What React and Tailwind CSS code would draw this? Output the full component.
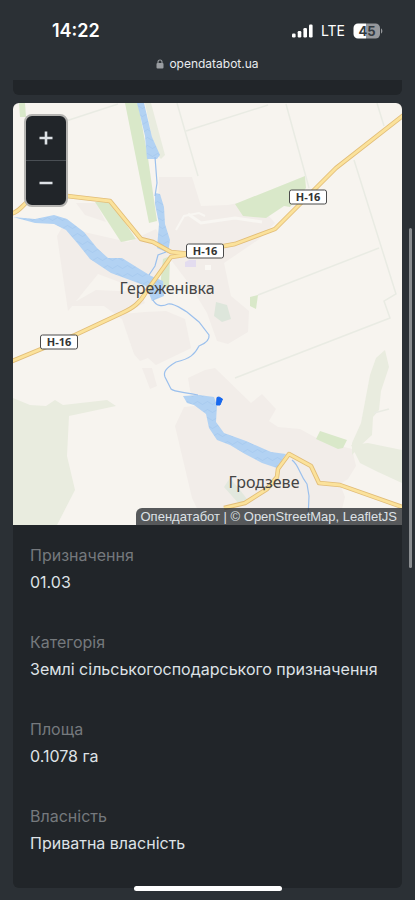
import React from 'react';

const fields = [
  { label: 'Призначення', value: '01.03' },
  { label: 'Категорія', value: 'Землі сільськогосподарського призначення' },
  { label: 'Площа', value: '0.1078 га' },
  { label: 'Власність', value: 'Приватна власність' },
];

const shields = [
  { x: 308, y: 197 },
  { x: 205, y: 251 },
  { x: 59, y: 342 },
];

const roads = [
  'M10 214 C18 213 21 207 27 202 L34 196 L67 196 L110 201 L141 239 L153 242 L171 252 L191 254',
  'M191 252 L235 244 L275 229 L296 208 L336 168 L405 114',
  'M191 254 L171 257 L146 292 C140 303 133 308 122 313 L75 335 L10 362',
  'M224 508 L245 503 L267 489 L277 477 L278 469 L289 454 L311 466 L319 483 L340 485 L405 508',
];

const StatusBar = () => (
  <div className="flex items-center justify-between pl-[52px] pr-8 h-[62px]">
    <span className="text-lg font-semibold leading-6">14:22</span>
    <div className="flex items-center gap-2">
      <svg width="21" height="14" viewBox="0 0 21 14" fill="#fff" aria-hidden="true">
        <rect x="0" y="9.500" width="3.600" height="4" rx="1.2" />
        <rect x="5.700" y="7" width="3.600" height="6.500" rx="1.2" />
        <rect x="11.400" y="4" width="3.600" height="9.500" rx="1.2" />
        <rect x="17" y="0.5" width="3.600" height="13" rx="1.2" />
      </svg>
      <span className="text-sm leading-5">LTE</span>
      <svg width="30" height="16" viewBox="0 0 30 16" role="img" aria-label="45">
        <path d="M5 .5h8v15H5a4.500 4.500 0 0 1-4.500-4.500V5A4.500 4.500 0 0 1 5 .5z" fill="#fff" />
        <path d="M13 .5h9.500A4.500 4.500 0 0 1 27 5v6a4.500 4.500 0 0 1-4.500 4.500H13z" fill="#96989c" />
        <path d="M28 5.500c1.800.6 1.800 4.400 0 5z" fill="#96989c" />
        <text x="14" y="12.500" fontSize="13" fontWeight="700" fill="#343a40" textAnchor="middle" fontFamily="Inter, sans-serif">45</text>
      </svg>
    </div>
  </div>
);

const MapDrawing = () => (
  <svg viewBox="13 103 389 422" preserveAspectRatio="xMidYMid slice" className="block w-full h-full" aria-hidden="true">
    <defs>
      <pattern id="waves" width="10" height="8" patternUnits="userSpaceOnUse">
        <rect width="10" height="8" fill="#b2d2f3" />
        <path d="M0 3q2.500 3 5 0t5 0" fill="none" stroke="#a5c8ee" strokeWidth="0.8" />
      </pattern>
    </defs>
    <rect x="13" y="103" width="389" height="422" fill="#f7f4ef" />

    {/* built-up areas */}
    <g fill="#f2ede9">
      <path d="M159 177L192 177L201 206L228 205L238 203L262 208L275 223L258 240L224 263L231 296L249 311L248 332L228 344L217 341L207 313L190 285L168 256L158 210z" />
      <path d="M57 236L64 224L84 232L128 242L156 229L170 253L146 292L98 274L68 311z" />
      <path d="M76 203L96 203L106 222L85 215z" />
      <path d="M104 306L68 306L96 290L140 292L145 303L122 314L145 312L166 311L185 319L191 348L183 352L156 365L148 358L140 361L134 354L122 319z" />
      <path d="M142 368L152 368L157 386L150 389z" />
      <path d="M188 378L205 370L215 368L251 403L262 394L276 409L269 421L278 427L300 429L322 441L352 449L356 466L348 479L340 484L345 497L338 525L205 525L192 498L175 426L184 407L194 406L190 390z" />
    </g>
    <path d="M188 214L201 223L235 218L262 222" fill="none" stroke="#f8f6f2" strokeWidth="3" />
    <path d="M176 230L184 216L199 213L205 216" fill="none" stroke="#f8f6f2" strokeWidth="2" />
    <path d="M189 260h7v7h-11v-5z" fill="#e3dcef" />
    <path d="M205 265h6v5h-6z" fill="#faf8f4" />

    {/* pale fields and meadows */}
    <g fill="#e9ecdf">
      <path d="M13 398L30 405L46 406L55 400L63 405L107 400L116 406L69 416L67 456L75 490L57 525L13 525z" />
      <path d="M376 358L385 350L389 367L381 391L379 410L373 417L372 435L361 445L352 455L352 443L361 423L370 375z" />
      <path d="M351 445L368 443L402 450L402 483L378 472L360 463z" />
      <path d="M145 103h6l14 52-4 4-6-6z" />
    </g>
    <path d="M216 302L227 305L231 319L222 322L214 316z" fill="#dde6db" />
    <path d="M224 487L230 478L240 490L250 503L240 505z" fill="#e2e8de" />

    {/* woodland */}
    <g fill="#d9e8c9">
      <path d="M19 103L25 103L26 117L20 117z" />
      <path d="M125 103L138 103L148 158L157 221L149 223L137 163z" />
      <path d="M95 202L111 202L136 239L121 242z" />
      <path d="M163 259L170 256L169 288L160 287z" />
      <path d="M235 204L305 176L306 188L290 207L284 206L266 218L243 216z" />
      <path d="M250 297L258 295L256 309L250 306z" />
      <path d="M320 431L347 440L343 448L338 449L316 439z" />
    </g>

    {/* field boundaries */}
    <g fill="none" stroke="#e9ebe3" strokeWidth="1.500">
      <path d="M66 121L118 104" />
      <path d="M177 103L185 131L198 176" />
      <path d="M186 131L268 105" />
      <path d="M286 104L309 188" />
      <path d="M377 103L384 126" />
      <path d="M354 160L396 294L384 301L390 318L235 378" />
      <path d="M258 295L379 248" />
      <path d="M374 413L389 409" />
    </g>

    {/* water */}
    <g fill="url(#waves)">
      <path d="M137 103L144 103L152 137L160 155L157 159L147 159L145 136L141 119z" />
      <path d="M155 193L160 194L164 207L165 224L170 240L168 253L157 248L159 224L155 204z" />
      <path d="M13 217L35 219L54 215L67 219L84 232L97 248L108 258L122 258L138 268L151 276L163 281L164 296L152 301L146 286L130 280L111 273L90 259L78 244L66 230L54 224L35 223z" />
      <path d="M183 396L199 395L214 397L217 405L216 422L224 433L246 441L271 452L286 454L277 468L262 463L245 454L230 445L217 440L209 428L206 414L194 405L187 403z" />
    </g>
    <g fill="none" stroke="#9bc0ed" strokeWidth="1.200">
      <path d="M155 157L157 183L155 196" />
      <path d="M166 252L158 255L155 266L149 275" />
      <path d="M153 300C156 306 162 307 168 304C174 303 180 308 187 312L199 322L209 335C210 341 204 344 199 346C195 354 190 359 176 362C166 368 163 372 165 377L171 389C174 392 184 392 198 395" />
      <path d="M292 460C299 465 299 474 307 484L309 496L308 520" />
    </g>

    <g fill="none" stroke="#e2bd78" strokeWidth="4.500" strokeLinejoin="round">
      {roads.map((d) => <path key={d} d={d} />)}
    </g>
    <g fill="none" stroke="#fbe29b" strokeWidth="2.800" strokeLinejoin="round">
      {roads.map((d) => <path key={d} d={d} />)}
    </g>

    <path d="M217 397.500L219 397L222.500 399L220 405L216.500 405z" fill="#1768ee" stroke="#1768ee" strokeLinejoin="round" />

    {shields.map((s) => (
      <g key={s.x}>
        <rect x={s.x - 18.5} y={s.y - 7} width="37" height="14" rx="2" fill="#fff" stroke="#4b4b4b" />
        <text x={s.x} y={s.y + 4} fontSize="11" fontWeight="700" textAnchor="middle" fill="#333" fontFamily="'Open Sans', sans-serif">H-16</text>
      </g>
    ))}

    <g fontSize="16" fill="#444" textAnchor="middle" fontFamily="'Noto Sans', sans-serif">
      <text x="167" y="294">Гереженівка</text>
      <text x="264" y="488">Гродзеве</text>
    </g>
  </svg>
);

const ParcelMap = () => (
  <div className="relative w-full aspect-[389/422] rounded-t-md overflow-hidden">
    <MapDrawing />
    <div className="absolute top-[11px] left-[11px] w-11 flex flex-col rounded-lg border-2 border-[#b5b4b1] bg-[#212529] overflow-hidden">
      <button type="button" aria-label="Збільшити" className="h-[45px] flex items-center justify-center border-b border-[#4a4f54]">
        <svg width="14" height="14" viewBox="0 0 14 14" stroke="#dee2e6" strokeWidth="2.600" aria-hidden="true">
          <path d="M.5 7h13M7 .5v13" />
        </svg>
      </button>
      <button type="button" aria-label="Зменшити" className="h-11 flex items-center justify-center">
        <svg width="14" height="14" viewBox="0 0 14 14" stroke="#dee2e6" strokeWidth="2.600" aria-hidden="true">
          <path d="M.5 7h13" />
        </svg>
      </button>
    </div>
    <div className="absolute right-0 bottom-0 px-[5px] rounded-tl-md bg-[#212529]/75 text-[#dee2e6] text-[13px] leading-[17px] font-['Liberation_Sans',sans-serif] whitespace-nowrap">
      <a href="#opendatabot">Опендатабот</a> | © <a href="#osm">OpenStreetMap</a>, <a href="#leaflet">LeafletJS</a>
    </div>
  </div>
);

const App = () => {
  return (
    <div className="relative min-h-screen bg-[#2b3035] text-white font-['Inter',sans-serif]">
      <header className="h-20">
        <StatusBar />
        <div className="flex items-center justify-center gap-[5px] h-1 text-[12px] leading-4 text-[#e9ecef]">
          <svg width="8" height="10" viewBox="0 0 8 10" aria-hidden="true">
            <rect x="0.500" y="4" width="7" height="5.500" rx="1" fill="#9a9da1" />
            <path d="M2 4.500V3a2 2 0 0 1 4 0v1.500" fill="none" stroke="#9a9da1" strokeWidth="1.100" />
          </svg>
          <span>opendatabot.ua</span>
        </div>
      </header>

      <main className="px-[13px] pb-3">
        <div className="h-[15px] mb-2 rounded-b-md bg-[#212529]" />
        <section className="rounded-md bg-[#212529]">
          <ParcelMap />
          <dl className="flex flex-col gap-8 px-[17px] pt-4 pb-[31px]">
            {fields.map((f) => (
              <div key={f.label}>
                <dt className="text-base leading-7 text-[#75797d]">{f.label}</dt>
                <dd className="text-base leading-[27px] text-[#dee2e6]">{f.value}</dd>
              </div>
            ))}
          </dl>
        </section>
      </main>

      <div className="absolute right-[3px] top-[228px] w-[3px] h-[340px] rounded-full bg-[#8b8e91]" />
      <div className="fixed inset-x-0 bottom-[9px] flex justify-center">
        <div className="w-[148px] h-[5px] rounded-full bg-white" />
      </div>
    </div>
  );
};

export default App;
